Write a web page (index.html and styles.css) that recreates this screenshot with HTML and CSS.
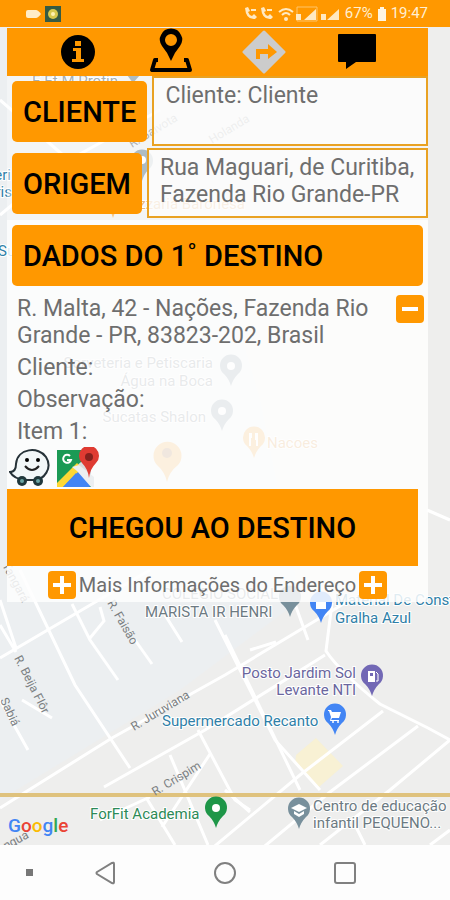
FILE: index.html
```
<!DOCTYPE html>
<html lang="pt-BR">
  <head>
    <meta charset="UTF-8" />
    <meta name="viewport" content="width=device-width, initial-scale=1.0" />
    <title>Corrida</title>
    <link rel="stylesheet" href="styles.css">
  </head>
  <body>
    <header class="status-bar">
      <svg class="status-left" width="44" height="18" viewBox="0 0 44 18">
        <path d="M8 5h8q2 0 5 4q-3 4-5 4H8q-2 0-2-2V7q0-2 2-2z" fill="#ffedc9" />
        <rect x="25" y="1" width="16" height="16" fill="#365b43" />
        <circle cx="33" cy="9" r="5" fill="#d8c94d" />
        <circle cx="33" cy="9" r="2" fill="#fff3b0" />
      </svg>
      <svg class="status-right" width="100" height="18" viewBox="0 0 100 18" fill="#ffe9c2">
        <path d="M4 3l3-1 2 4-2 1q1 3 4 4l2-2 3 3-2 2Q5 15 4 3z" />
        <path d="M20 3l3-1 2 4-2 1q1 3 4 4l2-2 3 3-2 2Q21 15 20 3z" />
        <path d="M10 5h5M26 5h5" stroke="#ffe9c2" stroke-width="2" />
        <g fill="none" stroke="#ffe9c2" stroke-width="2">
          <path d="M38 7q7-6 14 0M41 10q4-4 8 0" />
        </g>
        <circle cx="45" cy="14" r="2" />
        <path d="M56 2h20v14H56z" fill="none" stroke="#ffc469" />
        <path d="M63 15L75 4v11zM55 9h5v6h-5zM86 15L98 4v11zM80 9h5v6h-5z" />
      </svg>
      <span>67%</span>
      <svg width="10" height="14" viewBox="0 0 10 14">
        <path d="M3 0h4v2h2v12H1V2h2z" fill="#fff5e0" />
      </svg>
      <span>19:47</span>
    </header>

    <main class="screen">
      <svg class="map" viewBox="0 27 450 818" preserveAspectRatio="xMinYMin slice">
        <rect y="27" width="450" height="818" fill="#eeeeed" />
        <path d="M0 27H150L260 400 300 600 180 690 0 800z" fill="#eceff1" />
        <path d="M296 755l20-17 27 28-24 21-24-23z" fill="#f8f1d4" />
        <g class="roads">
          <path d="M0 658L92 604 150 570M0 808L112 738 225 675 345 603" />
          <path d="M104 787L205 730 325 655M0 100L80 170M0 215L60 165 160 110" />
          <path d="M0 600L16 648M20 570L75 685 130 768M0 625L16 652M22 700L52 718" />
          <path d="M72 604L90 640 118 680M90 638l14-17-4-14M135 640L152 664" />
          <path d="M165 615L182 642M215 620L275 740 320 790M198 730L235 800 250 810" />
          <path d="M225 635L300 790M250 650L276 642M295 604L308 640M332 603L326 651Q340 672 380 704L428 728 450 740" />
          <path d="M383 711L300 775 210 850M418 726L330 792 260 850M450 740L390 790 320 845" />
          <path d="M147 799L175 845M162 827L210 754M0 700L28 750M100 820L150 797M225 790L250 812" />
          <path d="M170 755L208 845M365 845L355 825M430 845L450 830M427 510L450 520" />
        </g>
        <path d="M0 795H450" stroke="#dfc27d" stroke-width="4" />

        <g class="street">
          <text x="107" y="603" transform="rotate(60 107 603)">R. Faisão</text>
          <text x="14" y="658" transform="rotate(63 14 658)">R. Beija Flôr</text>
          <text x="0" y="700" transform="rotate(65 0 700)">Sabiá</text>
          <text x="134" y="731" transform="rotate(-31 134 731)">R. Juruviana</text>
          <text x="155" y="796" transform="rotate(-31 155 796)">R. Crispim</text>
          <text x="6" y="850" transform="rotate(-28 6 850)">ngua</text>
          <text x="132" y="148" transform="rotate(-31 132 148)">R. Gaivota</text>
          <text x="212" y="144" transform="rotate(-31 212 144)">Holanda</text>
          <text x="2" y="565" transform="rotate(62 2 565)">Tangará</text>
        </g>

        <g class="place">
          <text class="grey" x="32" y="86">E Et M Protin</text>
          <path d="M127 75h13l-7 8z" fill="#78909c" />
          <text class="blue" x="11" y="180" text-anchor="end">eri</text>
          <text class="blue" x="12" y="197" text-anchor="end">ris</text>
          <text class="blue" x="-2" y="256">Su</text>
          <text class="amber" x="245" y="209" text-anchor="end">Pizzaria Baronesa</text>
          <text class="grey" x="213" y="368" text-anchor="end">Sorveteria e Petiscaria</text>
          <text class="grey" x="213" y="386" text-anchor="end">Água na Boca</text>
          <text class="grey" x="206" y="422" text-anchor="end">Sucatas Shalon</text>
          <text class="amber" x="267" y="448">Nacoes</text>
          <text class="grey" x="162" y="599">COLÉGIO SOCIAL</text>
          <text class="grey" x="145" y="617">MARISTA IR HENRI</text>
          <text class="blue" x="335" y="605">Material De Construção</text>
          <text class="blue" x="335" y="623">Gralha Azul</text>
          <text class="purple" x="356" y="678" text-anchor="end">Posto Jardim Sol</text>
          <text class="purple" x="356" y="695" text-anchor="end">Levante NTI</text>
          <text class="blue" x="162" y="726">Supermercado Recanto</text>
          <text class="green" x="90" y="819">ForFit Academia</text>
          <text class="grey" x="313" y="811">Centro de educação</text>
          <text class="grey" x="313" y="828">infantil PEQUENO...</text>
        </g>

        <defs>
          <path id="pin" d="M0 0Q-2-7-7-12A11 11 0 1 1 7-12Q2-7 0 0z" />
        </defs>
        <g fill="#78909c">
          <use href="#pin" x="142" y="181" />
          <use href="#pin" x="231" y="386" />
          <use href="#pin" x="222" y="431" />
          <use href="#pin" x="290" y="617" />
          <use href="#pin" x="299" y="829" />
        </g>
        <g fill="#f0a030">
          <use href="#pin" x="113" y="218" />
          <use href="#pin" x="254" y="458" />
          <path d="M167 482Q165 472 157 465A14 14 0 1 1 178 465Q169 472 167 482z" />
        </g>
        <use href="#pin" x="321" y="623" fill="#4285f4" />
        <use href="#pin" x="335" y="735" fill="#4285f4" />
        <use href="#pin" x="372" y="696" fill="#7268b5" />
        <use href="#pin" x="216" y="828" fill="#1e9648" />
        <g fill="#fff">
          <circle cx="142" cy="160" r="4" />
          <circle cx="231" cy="366" r="4" />
          <circle cx="222" cy="411" r="4" />
          <circle cx="216" cy="808" r="4" />
          <path d="M249 433h3v5h-1v8h-2zM255 433h3v13h-2v-6h-1z" />
          <path d="M316 602h10v7h-10z" />
          <path d="M328 710h3l1 2h9l-2 6h-7l-1 2h8v1h-9l1-4-2-6h-1z" />
          <circle cx="333" cy="722" r="1" />
          <circle cx="338" cy="722" r="1" />
          <path d="M368 671h7v11h-7z" />
          <path d="M376 672l2 2v7h-2" fill="none" stroke="#fff" />
          <path d="M291 808l8-4 8 4-8 4zM294 811l5 3 5-3v3l-5 3-5-3z" />
        </g>
        <path d="M370 673h3v3h-3z" fill="#7268b5" />
        <circle cx="167" cy="453" r="5" fill="#a06a30" />
        <text class="google" x="8" y="832"><tspan fill="#4285f4">G</tspan><tspan fill="#ea4335">o</tspan><tspan fill="#fbbc05">o</tspan><tspan fill="#4285f4">g</tspan><tspan fill="#34a853">l</tspan><tspan fill="#ea4335">e</tspan></text>
      </svg>

      <section class="panel">
        <nav class="toolbar">
          <button class="tool" aria-label="Informações">
            <svg width="44" height="48" viewBox="0 0 44 48">
              <circle cx="22" cy="24" r="17" />
              <path d="M19 13h6v5h-6zM17 20h8v11h3v3H16v-3h4v-8h-3z" fill="#ff9800" />
            </svg>
          </button>
          <button class="tool" aria-label="Localização">
            <svg width="44" height="48" viewBox="0 0 44 48">
              <path fill-rule="evenodd" d="M22 33Q19 25 13 18Q9 12 12 7A11 11 0 0 1 32 7Q35 12 31 18Q25 25 22 33zM22 6a6 6 0 1 0 0 12a6 6 0 1 0 0-12z" />
              <path d="M9 32H6L3 42H41L38 32H35" fill="none" stroke="#000" stroke-width="4" stroke-linejoin="round" />
            </svg>
          </button>
          <button class="tool" aria-label="Rota">
            <svg width="44" height="48" viewBox="0 0 44 48">
              <path d="M22 4L42 24 22 44 2 24z" fill="#ccc" stroke="#ccc" stroke-width="3" stroke-linejoin="round" />
              <path d="M14 31V21h12v-5l9 8-9 7v-5h-8v5z" fill="#ff9800" />
            </svg>
          </button>
          <button class="tool" aria-label="Mensagens">
            <svg width="44" height="48" viewBox="0 0 44 48">
              <path d="M4 6H40q1 0 1 1V33q0 1-1 1H21L11 41V34H4q-1 0-1-1V7q0-1 1-1z" />
            </svg>
          </button>
        </nav>

        <div class="row">
          <button class="btn">CLIENTE</button>
          <div class="field">Cliente: Cliente</div>
        </div>
        <div class="row">
          <button class="btn">ORIGEM</button>
          <div class="field">Rua Maguari, de Curitiba, Fazenda Rio Grande-PR</div>
        </div>

        <div class="destination">
          <button class="btn btn-wide">DADOS DO 1˚ DESTINO</button>
          <div class="address">
            <p>R. Malta, 42 - Nações, Fazenda Rio Grande - PR, 83823-202, Brasil</p>
            <button class="square-btn" aria-label="Recolher">
              <svg width="28" height="28" viewBox="0 0 28 28"><path d="M6 14H22" /></svg>
            </button>
          </div>
          <div class="details">
            <p>Cliente:</p>
            <p>Observação:</p>
            <p>Item 1:</p>
          </div>
          <div class="apps">
            <a href="#" aria-label="Waze">
              <svg width="42" height="40" viewBox="0 0 42 40">
                <path d="M1 25Q7 25 7 17C8 1 30-1 37 10C44 21 35 33 25 33H16Q5 32 1 25z" fill="#f2f7f8" stroke="#263238" stroke-width="2" />
                <circle cx="13" cy="34" r="5" fill="#20383c" />
                <circle cx="29" cy="34" r="5" fill="#20383c" />
                <circle cx="13" cy="34" r="2" fill="#6aa5a3" />
                <circle cx="29" cy="34" r="2" fill="#6aa5a3" />
                <circle cx="18" cy="13" r="2" />
                <circle cx="29" cy="13" r="2" />
                <path d="M16 19q7 8 14 0" fill="none" stroke="#222" stroke-width="2" />
              </svg>
            </a>
            <a href="#" aria-label="Google Maps">
              <svg width="44" height="40" viewBox="0 0 44 40">
                <path d="M2 3H26L36 20V40H2z" fill="#1b9a55" />
                <path d="M20 20L36 38V15H26z" fill="#d9dcdf" />
                <path d="M2 40L22 18 37 38 34 40z" fill="#4285f4" />
                <path d="M2 36L22 16 27 21 8 40H2z" fill="#fdd835" />
                <path d="M17 20L22 24 36 40H39V30L24 18z" fill="#eceff1" />
                <path d="M8 40L21 26 34 40z" fill="#4285f4" />
                <path d="M15 9a4 4 0 1 0 1 4h-4" fill="none" stroke="#fff" stroke-width="2" />
                <path d="M34 31Q33 22 27 16A10 10 0 1 1 41 16Q35 22 34 31z" fill="#df3b32" />
                <circle cx="34" cy="10" r="4" fill="#85211d" />
              </svg>
            </a>
          </div>
          <button class="arrived">CHEGOU AO DESTINO</button>
          <div class="more">
            <button class="square-btn" aria-label="Abrir">
              <svg width="28" height="28" viewBox="0 0 28 28"><path d="M5 14H23M14 5V23" /></svg>
            </button>
            <span>Mais Informações do Endereço</span>
            <button class="square-btn" aria-label="Mostrar mais">
              <svg width="28" height="28" viewBox="0 0 28 28"><path d="M5 14H23M14 5V23" /></svg>
            </button>
          </div>
        </div>
      </section>
    </main>

    <footer class="nav-bar">
      <span class="nav-dot"></span>
      <button aria-label="Voltar">
        <svg width="24" height="24" viewBox="0 0 24 24"><path d="M4 11L19 2q2-1 2 1V21q0 2-2 1L4 13q-1-1 0-2z" /></svg>
      </button>
      <button aria-label="Início">
        <svg width="24" height="24" viewBox="0 0 24 24"><circle cx="12" cy="12" r="10" /></svg>
      </button>
      <button aria-label="Recentes">
        <svg width="24" height="24" viewBox="0 0 24 24"><rect x="2" y="2" width="20" height="20" rx="2" /></svg>
      </button>
    </footer>
  </body>
</html>
```
FILE: styles.css
```
* {
  box-sizing: border-box;
}
body {
  margin: 0;
  min-height: 100vh;
  display: flex;
  flex-direction: column;
  font-family: Roboto, sans-serif;
  font-size: 23px;
  line-height: 27px;
  color: #6e6e6e;
}
button {
  font-family: inherit;
  border: none;
  padding: 0;
  margin: 0;
  background: none;
  color: #000;
}
svg {
  display: block;
}
p {
  margin: 0;
}

.status-bar {
  display: flex;
  align-items: center;
  gap: 4px;
  height: 27px;
  padding: 0 22px 0 20px;
  background: #ff9800;
  color: #ffefd2;
  font-size: 15px;
}
.status-right {
  margin-left: auto;
}

.screen {
  flex: 1;
  position: relative;
  overflow: hidden;
}
.map {
  position: absolute;
  top: 0;
  left: 0;
  width: 100%;
  height: 100%;
}
.roads path {
  fill: none;
  stroke: #fff;
  stroke-width: 3;
}
.street {
  font-size: 12px;
  fill: #7b7f82;
}
.place {
  font-size: 15px;
  stroke: #fff;
  stroke-width: 2px;
  paint-order: stroke;
}
.place path {
  stroke: none;
}
.grey {
  fill: #6c7a82;
}
.blue {
  fill: #2f7fa8;
}
.purple {
  fill: #6a669e;
}
.green {
  fill: #2c8a57;
}
.amber {
  fill: #d98a2b;
}
.google {
  font-size: 19px;
  font-weight: 500;
}

.panel {
  position: relative;
  margin: 1px 22px 0 7px;
  background: rgba(255, 255, 255, 0.4);
}
.toolbar {
  display: grid;
  grid-template-columns: repeat(4, 1fr);
  padding: 0 24px;
  background: #ff9800;
}
.tool {
  display: flex;
  justify-content: center;
}
.row {
  display: flex;
  align-items: flex-start;
  gap: 5px;
  padding-left: 5px;
  margin-bottom: 2px;
}
.btn {
  height: 61px;
  margin-top: 5px;
  padding: 0 11px;
  border-radius: 5px;
  background: #ff9800;
  font-size: 29px;
  font-weight: 500;
  text-align: left;
  white-space: nowrap;
}
.field {
  flex: 1;
  min-height: 70px;
  padding: 4px 0 4px 11px;
  border: 2px solid #e9a223;
  background: rgba(253, 253, 253, 0.8);
}

.destination {
  padding: 5px 0 3px;
  background: rgba(253, 253, 253, 0.75);
}
.btn-wide {
  display: block;
  width: calc(100% - 10px);
  margin: 0 5px;
}
.address {
  display: flex;
  align-items: flex-start;
  justify-content: space-between;
  padding: 9px 4px 0 10px;
}
.details {
  padding-left: 10px;
}
.details p {
  margin-top: 5px;
}
.square-btn {
  border-radius: 4px;
  background: #ff9800;
}
.square-btn path {
  stroke: #fff;
  stroke-width: 4;
}
.apps {
  display: flex;
  gap: 4px;
  padding: 2px;
}
.arrived {
  display: block;
  width: calc(100% - 10px);
  height: 77px;
  margin-bottom: 5px;
  background: #ff9800;
  font-size: 29px;
  font-weight: 500;
}
.more {
  display: flex;
  align-items: center;
  justify-content: center;
  gap: 3px;
  font-size: 20px;
  white-space: nowrap;
}

.nav-bar {
  display: grid;
  grid-template-columns: 3fr 8fr 8fr 8fr 3fr;
  align-items: center;
  height: 55px;
  background: #fdfdfd;
}
.nav-bar button {
  justify-self: center;
}
.nav-bar svg {
  fill: none;
  stroke: #808080;
  stroke-width: 2;
}
.nav-dot {
  justify-self: end;
  width: 7px;
  height: 7px;
  margin-right: 12px;
  background: #777;
}
```
